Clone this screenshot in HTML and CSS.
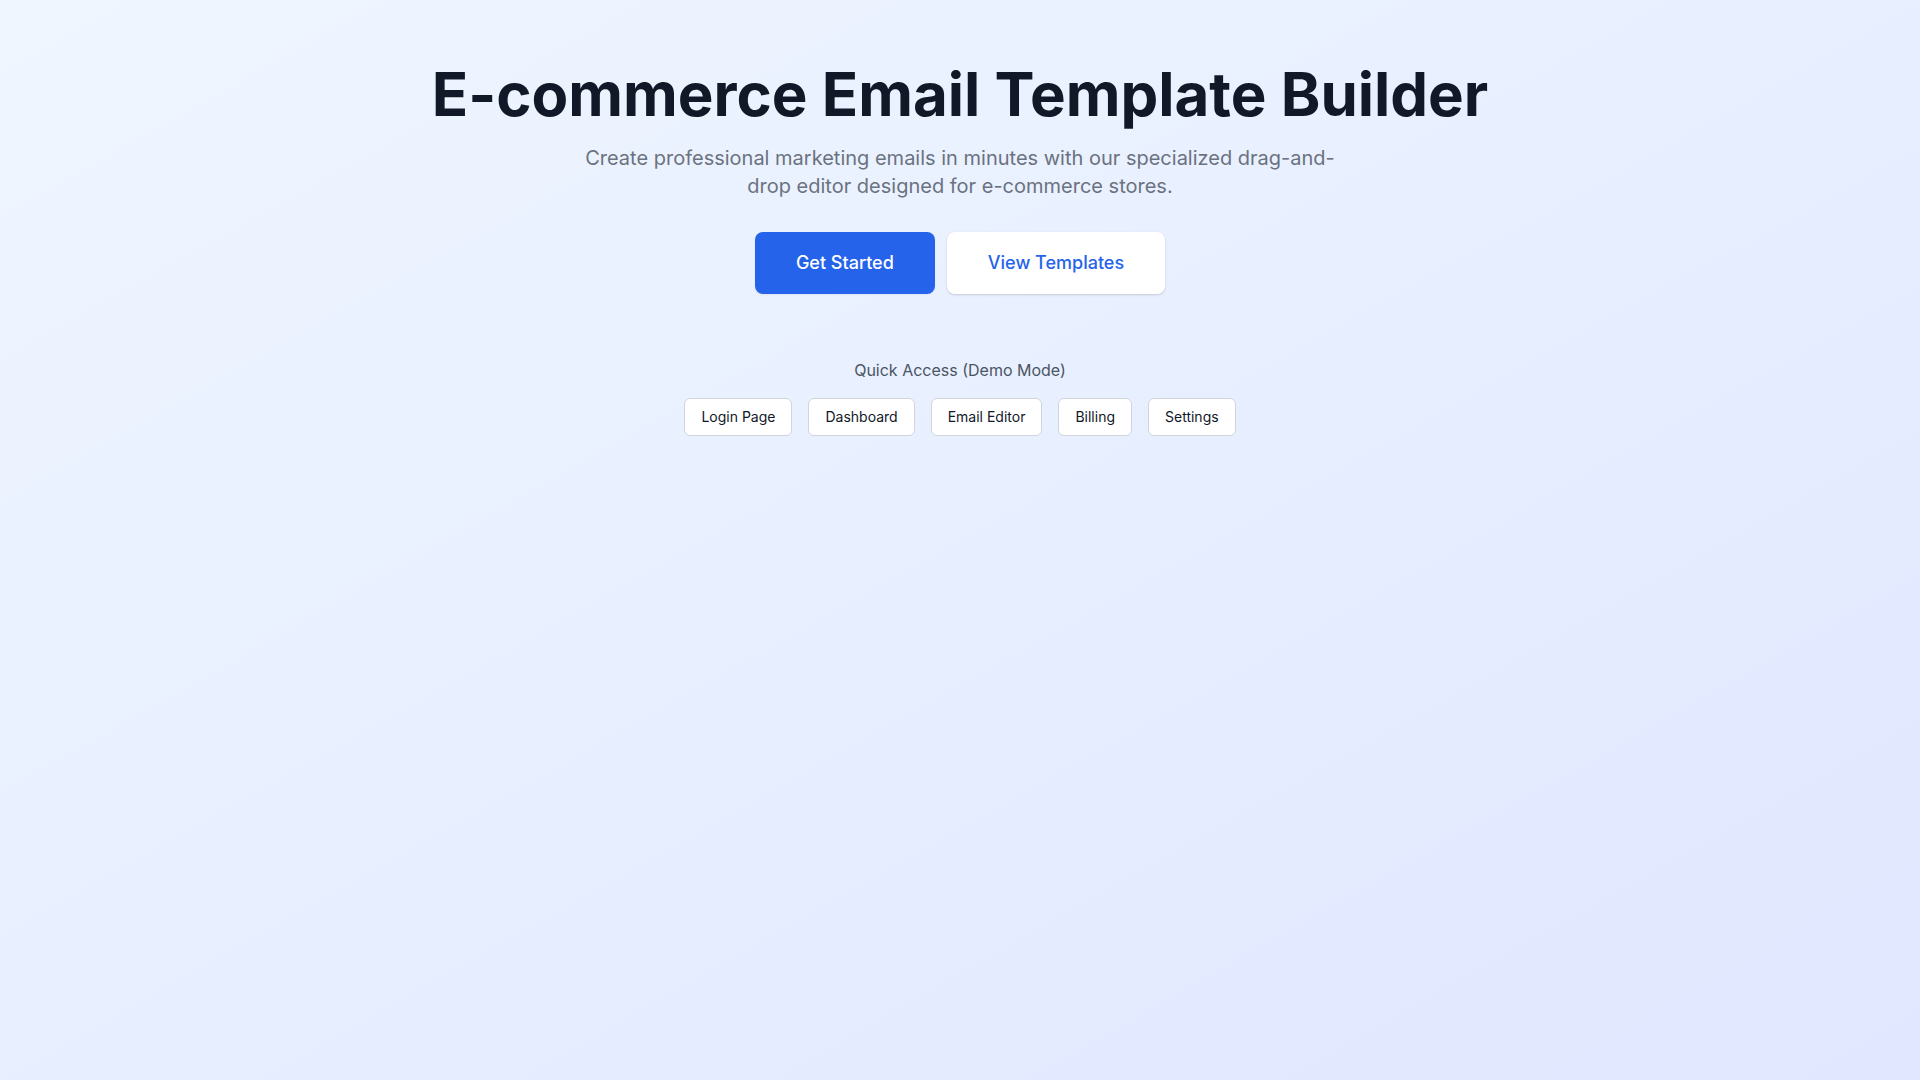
FILE: index.html
```html
<!DOCTYPE html>
<html lang="en">
<head>
    <meta charset="UTF-8">
    <meta name="viewport" content="width=device-width, initial-scale=1.0">
    <title>E-commerce Email Template Builder</title>
    <link rel="stylesheet" href="styles.css">
</head>
<body>
    <main class="hero">
        <h1>E-commerce Email Template Builder</h1>
        <p class="lead">Create professional marketing emails in minutes with our specialized drag-and-drop editor designed for e-commerce stores.</p>

        <div class="cta-row">
            <button class="btn btn-primary">Get Started</button>
            <button class="btn btn-light">View Templates</button>
        </div>

        <section class="quick-access">
            <p class="quick-label">Quick Access (Demo Mode)</p>
            <div class="quick-links">
                <button class="chip">Login Page</button>
                <button class="chip">Dashboard</button>
                <button class="chip">Email Editor</button>
                <button class="chip">Billing</button>
                <button class="chip">Settings</button>
            </div>
        </section>
    </main>
</body>
</html>
```

FILE: styles.css
```css
html, body {
    height: 100%;
}

body {
    margin: 0;
    font-family: Inter, "Noto Sans", Arial, sans-serif;
    background: linear-gradient(to bottom right, #eff6ff, #e0e7ff);
    color: #111827;
}

.hero {
    display: flex;
    flex-direction: column;
    align-items: center;
    padding: 64px 16px;
    text-align: center;
}

h1 {
    margin: 0 0 20px;
    font-size: 60px;
    line-height: 1;
    font-weight: 700;
    color: #111827;
}

.lead {
    margin: 0 0 32px;
    max-width: 768px;
    font-size: 20px;
    line-height: 28px;
    color: #6b7280;
}

.cta-row {
    display: flex;
    gap: 12px;
}

.btn {
    font-family: inherit;
    font-size: 18px;
    line-height: 28px;
    font-weight: 500;
    padding: 16px 40px;
    border: 1px solid transparent;
    border-radius: 8px;
    cursor: pointer;
}

.btn-primary {
    background-color: #2563eb;
    color: #fff;
    box-shadow: 0 1px 2px rgba(0, 0, 0, 0.05);
}

.btn-light {
    background-color: #fff;
    color: #2563eb;
    box-shadow: 0 1px 3px rgba(0, 0, 0, 0.1), 0 1px 2px rgba(0, 0, 0, 0.06);
}

.quick-access {
    margin-top: 64px;
}

.quick-label {
    margin: 0 0 16px;
    font-size: 16px;
    line-height: 24px;
    color: #4b5563;
}

.quick-links {
    display: flex;
    gap: 16px;
    justify-content: center;
}

.chip {
    font-family: inherit;
    font-size: 14px;
    line-height: 20px;
    padding: 8px 16px;
    background-color: #fff;
    color: #111827;
    border: 1px solid #d1d5db;
    border-radius: 6px;
    cursor: pointer;
}
```
